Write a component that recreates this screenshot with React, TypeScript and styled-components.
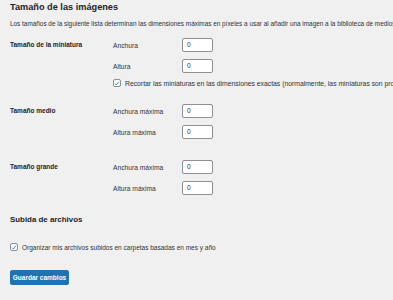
import React from "react";
import styled, { createGlobalStyle } from "styled-components";

const Global = createGlobalStyle`
  html, body { margin: 0; padding: 0; background: #f0f0f1; }
  body {
    font-family: "Liberation Sans", Arial, sans-serif;
    color: #1d2327;
    font-size: 6.5px;
    -webkit-font-smoothing: antialiased;
  }
  * { box-sizing: border-box; }
`;

const Page = styled.div`
  width: 393px;
  height: 300px;
  overflow: hidden;
  padding: 0 0 0 10px;
  white-space: nowrap;
`;

const Title = styled.h2<{ $top: number; $size: number }>`
  margin: ${(p) => p.$top}px 0 0;
  font-size: ${(p) => p.$size}px;
  line-height: 11px;
  font-weight: 600;
  color: #1d2327;
`;

const Description = styled.p`
  margin: 6px 0 0;
  font-size: 6.4px;
  line-height: 9px;
  color: #2c3338;
`;

const Table = styled.div`
  display: flex;
  flex-direction: column;
`;

const Row = styled.div<{ $top: number }>`
  display: flex;
  padding-top: ${(p) => p.$top}px;
`;

const Th = styled.div`
  width: 103px;
  flex: none;
  font-weight: 700;
  font-size: 6.5px;
  line-height: 14px;
  color: #1d2327;
`;

const Td = styled.div`
  display: flex;
  flex-direction: column;
  gap: 7px;
`;

const Field = styled.div`
  display: flex;
  align-items: center;
  height: 14px;
`;

const FieldLabel = styled.label`
  width: 69px;
  flex: none;
  font-size: 6.7px;
  color: #2c3338;
`;

const NumberInput = styled.div`
  width: 31px;
  height: 14px;
  background: #fff;
  border: 1px solid #8c8f94;
  border-radius: 2px;
  font-size: 6.5px;
  line-height: 12px;
  padding-left: 4px;
  color: #2c3338;
`;

const CheckLine = styled.div<{ $top: number; $size: number }>`
  display: flex;
  align-items: center;
  gap: 4px;
  margin-top: ${(p) => p.$top}px;
  font-size: ${(p) => p.$size}px;
  color: #2c3338;
  height: 10px;
`;

const Box = styled.span`
  width: 8px;
  height: 8px;
  flex: none;
  background: #fff;
  border: 1px solid #8c8f94;
  border-radius: 2px;
  display: flex;
  align-items: center;
  justify-content: center;
`;

const Button = styled.button`
  margin-top: 18px;
  height: 15px;
  width: 59px;
  padding: 0;
  background: #2271b1;
  border: 1px solid #2271b1;
  border-radius: 2px;
  color: #fff;
  font-family: inherit;
  font-size: 6.5px;
  font-weight: 600;
  display: flex;
  align-items: center;
  justify-content: center;
`;

const Check = () => (
  <Box>
    <svg width="7" height="7" viewBox="0 0 20 20">
      <path d="M3.5 10.5 L8 15 L16.5 4" fill="none" stroke="#2271b1" strokeWidth="2.6" />
    </svg>
  </Box>
);

const NumField = ({ label }: { label: string }) => (
  <Field>
    <FieldLabel>{label}</FieldLabel>
    <NumberInput>0</NumberInput>
  </Field>
);

export default function App() {
  return (
    <Page>
      <Global />
      <Title $top={2} $size={9.2}>Tamaño de las imágenes</Title>
      <Description>
        Los tamaños de la siguiente lista determinan las dimensiones máximas en píxeles a usar al añadir una imagen a la biblioteca de medios.
      </Description>
      <Table>
        <Row $top={10}>
          <Th>Tamaño de la miniatura</Th>
          <Td>
            <NumField label="Anchura" />
            <NumField label="Altura" />
            <CheckLine $top={-2} $size={6.8}>
              <Check />
              Recortar las miniaturas en las dimensiones exactas (normalmente, las miniaturas son proporcionales)
            </CheckLine>
          </Td>
        </Row>
        <Row $top={16}>
          <Th>Tamaño medio</Th>
          <Td>
            <NumField label="Anchura máxima" />
            <NumField label="Altura máxima" />
          </Td>
        </Row>
        <Row $top={21}>
          <Th>Tamaño grande</Th>
          <Td>
            <NumField label="Anchura máxima" />
            <NumField label="Altura máxima" />
          </Td>
        </Row>
      </Table>
      <Title $top={19} $size={7.9}>Subida de archivos</Title>
      <CheckLine $top={17} $size={6.5}>
        <Check />
        Organizar mis archivos subidos en carpetas basadas en mes y año
      </CheckLine>
      <Button>Guardar cambios</Button>
    </Page>
  );
}
